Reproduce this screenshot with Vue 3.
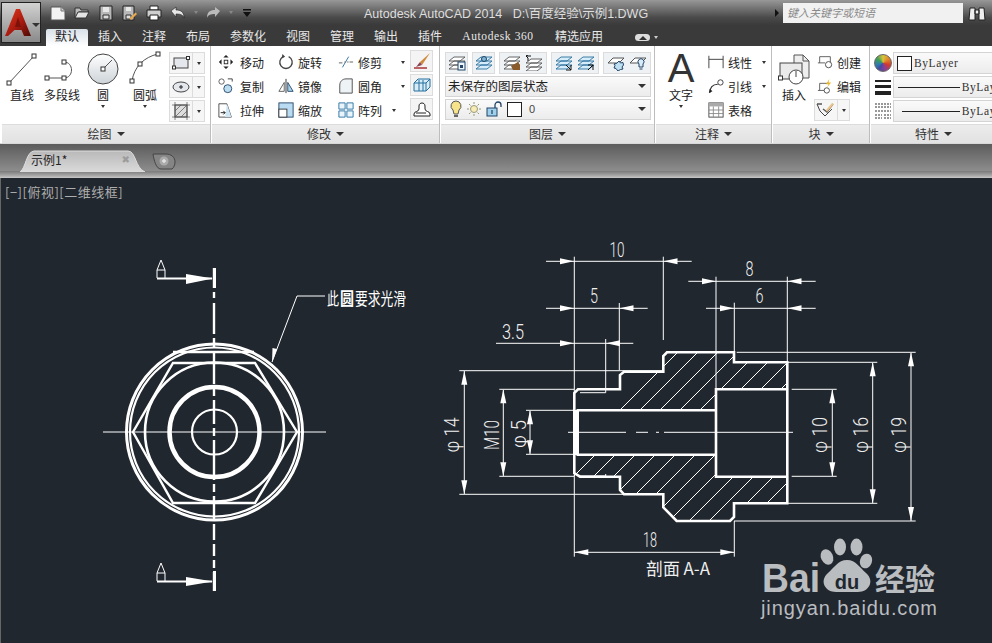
<script setup>
const menuTabs = ['插入','注释','布局','参数化','视图','管理','输出','插件']
const hatch = []
for (let c = 900; c < 1400; c += 20) hatch.push(c)
const dashV = [[268,288],[292,298],[303,334],[338,347],[352,384],[388,396],[400,424],[428,436],[440,480],[484,492],[496,520],[524,540],[544,556],[560,568],[572,591]]
const arrows = [
  [546,261.3,574,'r'],[691,261.3,663.5,'l'],
  [546,308.3,574,'r'],[647,308.3,619.5,'l'],
  [546,343.3,574,'r'],[633,343.3,606,'l'],
  [688,281.3,716,'r'],[815,281.3,787.5,'l'],
  [706,308.3,734,'r'],[815,308.3,787.5,'l'],
]
const hDims = [
  { x: 617, y: 256.7, w: 15, t: '10' },
  { x: 749.5, y: 276, w: 8, t: '8' },
  { x: 759.5, y: 302.7, w: 8, t: '6' },
  { x: 594, y: 302.7, w: 8, t: '5' },
  { x: 513, y: 339, w: 22, t: '3.5' },
  { x: 650, y: 546.7, w: 14, t: '18' },
]
const vDims = [
  { x: 459, y: 435, w: 35, t: 'φ 14' },
  { x: 499, y: 435, w: 30, t: 'M10' },
  { x: 526, y: 434, w: 28, t: 'φ 5' },
  { x: 827, y: 435, w: 36, t: 'φ 10' },
  { x: 868, y: 435, w: 36, t: 'φ 16' },
  { x: 906, y: 435, w: 36, t: 'φ 19' },
]
function head(x, y, tip) {
  const d = tip > x ? 1 : -1
  const s = tip - 14 * d
  return `${s},${y - 3} ${tip},${y} ${s},${y + 3}`
}
function vhead(x, tip, dir) {
  const s = tip - 14 * dir
  return `${x - 3},${s} ${x},${tip} ${x + 3},${s}`
}
</script>

<template>
  <div class="app">
    <svg class="defs" width="0" height="0">
      <defs>
        <g id="stk"><path d="M1 6l5-4h11l-5 4zM1 10l5-4h11l-5 4zM1 14l5-4h11l-5 4z" fill="#fff" stroke="#555" stroke-width=".9"/></g>
        <g id="stb"><path d="M1 6l5-4h11l-5 4zM1 10l5-4h11l-5 4zM1 14l5-4h11l-5 4z" fill="#d5ecfa" stroke="#2b6f9c" stroke-width=".9"/></g>
      </defs>
    </svg>
    <div class="logo">
      <svg width="26" height="28" viewBox="0 0 26 28"><defs><linearGradient id="ar" x1="0" y1="0" x2="1" y2="1"><stop offset="0" stop-color="#e5391d"/><stop offset=".55" stop-color="#a81a10"/><stop offset="1" stop-color="#4e0a06"/></linearGradient></defs><path d="M11 0h4l11 27h-7l-2.500-6H9.500L3 27H0z" fill="url(#ar)"/><path d="M13 8l3 10h-6z" fill="#7d120b"/></svg>
      <i class="tri light"></i>
    </div>

    <header class="titlebar">
      <div class="qat">
        <svg class="q" viewBox="0 0 16 16"><path d="M1 2h10l4 4v9H1z" fill="#f2f2f2" stroke="#555"/><path d="M11 2v4h4" fill="#ccc" stroke="#777"/></svg>
        <svg class="q" viewBox="0 0 16 16"><path d="M1 3h5l1 2h7v2H5l-3 6H1z" fill="#bbb" stroke="#333"/><path d="M4 7h11l-3 6H1z" fill="#e4e4e4" stroke="#333"/></svg>
        <svg class="q" viewBox="0 0 16 16"><path d="M2 1h12v14H2z" fill="#b8b8b8" stroke="#222"/><path d="M5 2h6v5H5z" fill="#e8e8e8"/><path d="M5 10h6v4H5z" fill="#ddd" stroke="#333"/></svg>
        <svg class="q" viewBox="0 0 16 16"><path d="M1 1h11v14H1z" fill="#b8b8b8" stroke="#222"/><path d="M4 2h5v4H4z" fill="#e8e8e8"/><path d="M4 10h5v4H4z" fill="#ddd" stroke="#333"/><path d="M9 15l6-6-1.500-1.500-6 6z" fill="#e9a84a"/></svg>
        <svg class="q" viewBox="0 0 16 16"><path d="M4 1h8v4H4z" fill="#fff" stroke="#222"/><path d="M1 5h14v7H1z" fill="#cfcfcf" stroke="#222"/><path d="M4 10h8v5H4z" fill="#fff" stroke="#222"/></svg>
        <svg class="q" viewBox="0 0 16 16"><path d="M1 6l5-4v3c5 0 8 2 8 8-1-3-3-4-8-4v3z" fill="#e6e6e6" stroke="#222" stroke-width=".6"/></svg>
        <i class="tri small dim"></i>
        <svg class="q dimmed" viewBox="0 0 16 16"><path d="M15 6l-5-4v3c-5 0-8 2-8 8 1-3 3-4 8-4v3z" fill="#bbb"/></svg>
        <i class="tri small dim"></i>
        <svg class="q more" viewBox="0 0 10 10"><path d="M1 1h8v1.500H1zM1 4h8L5 9z" fill="#111"/></svg>
      </div>
      <div class="doc">Autodesk AutoCAD 2014 &nbsp;&nbsp;D:\百度经验\示例1.DWG</div>
      <i class="search-arrow"></i>
      <div class="search">键入关键字或短语</div>
      <svg class="binoc" width="18" height="16" viewBox="0 0 18 16"><path d="M2 3h5v12H1zM11 3h5l1 12h-6zM7 5h4v4H7z" fill="#eee" stroke="#222"/></svg>
    </header>

    <nav class="menubar">
      <div class="tab active">默认</div>
      <div v-for="t in menuTabs" :key="t" class="tab">{{ t }}</div>
      <div class="tab mono">Autodesk 360</div>
      <div class="tab">精选应用</div>
      <div class="tab-ctl"><span class="pill"><i class="tri up"></i></span><i class="tri small pale"></i></div>
    </nav>

    <section class="ribbon">
      <div class="panel p-draw">
        <div class="body draw-body">
          <div class="big w-line">
            <svg width="32" height="36" viewBox="0 0 32 36"><path d="M3 32L28 5" stroke="#555"/><rect x="1" y="30" width="4" height="4" fill="#fff" stroke="#333"/><rect x="26" y="3" width="4" height="4" fill="#fff" stroke="#333"/></svg>
            <span>直线</span>
          </div>
          <div class="big w-pline">
            <svg width="36" height="36" viewBox="0 0 36 36"><path d="M3 27h17c10 0 10-16 0-16" fill="none" stroke="#555"/><rect x="1" y="25" width="4" height="4" fill="#fff" stroke="#333"/><rect x="18" y="25" width="4" height="4" fill="#fff" stroke="#333"/><rect x="18" y="9" width="4" height="4" fill="#fff" stroke="#333"/></svg>
            <span>多段线</span>
          </div>
          <div class="big w-circ">
            <svg width="32" height="36" viewBox="0 0 32 36"><defs><linearGradient id="cg" x1="0" y1="0" x2="0" y2="1"><stop offset="0" stop-color="#fff"/><stop offset="1" stop-color="#cdd3d8"/></linearGradient></defs><circle cx="16" cy="18" r="15" fill="url(#cg)" stroke="#444"/><path d="M16 18l9-9" stroke="#555"/><rect x="14" y="16" width="4" height="4" fill="#fff" stroke="#333"/></svg>
            <span>圆</span><i class="tri small"></i>
          </div>
          <div class="big w-arc">
            <svg width="34" height="36" viewBox="0 0 34 36"><path d="M4 30C6 16 16 6 30 3" fill="none" stroke="#555"/><rect x="2" y="28" width="4" height="4" fill="#fff" stroke="#333"/><rect x="10" y="11" width="4" height="4" fill="#fff" stroke="#333"/><rect x="28" y="1" width="4" height="4" fill="#fff" stroke="#333"/></svg>
            <span>圆弧</span><i class="tri small"></i>
          </div>
          <div class="stack">
            <div class="split"><span><svg width="18" height="14" viewBox="0 0 18 14"><rect x="2" y="2" width="14" height="10" fill="#e4e8ec" stroke="#444"/><rect x="0.500" y="10" width="3" height="3" fill="#fff" stroke="#333"/><rect x="14.500" y="0.500" width="3" height="3" fill="#fff" stroke="#333"/></svg></span><b><i class="tri small"></i></b></div>
            <div class="split"><span><svg width="18" height="14" viewBox="0 0 18 14"><ellipse cx="9" cy="7" rx="8" ry="5" fill="#e4e8ec" stroke="#444"/><path d="M7 7h4M9 5v4" stroke="#222"/></svg></span><b><i class="tri small"></i></b></div>
            <div class="split"><span><svg width="18" height="18" viewBox="0 0 18 18"><rect x="3" y="3" width="12" height="12" fill="#ddd" stroke="#444"/><path d="M3 9l6-6M3 15L15 3M9 15l6-6M0 3h18M0 15h18M3 0v18M15 0v18" stroke="#555" stroke-width=".7"/></svg></span><b><i class="tri small"></i></b></div>
          </div>
        </div>
        <footer class="foot">绘图 <i class="tri"></i></footer>
      </div>

      <div class="panel p-modify">
        <div class="body modify-body">
          <div class="row c1"><svg class="ic" viewBox="0 0 18 18"><path d="M9 1l3 3H6zM9 17l3-3H6zM1 9l3-3v6zM17 9l-3-3v6z" fill="#222"/><rect x="7" y="7" width="4" height="4" fill="#fff" stroke="#222"/></svg>移动</div>
          <div class="row"><svg class="ic" viewBox="0 0 18 18"><path d="M12 3a7 7 0 1 1-6 0" fill="none" stroke="#444" stroke-width="1.500"/><path d="M5 0l3 3-4 2z" fill="#444"/></svg>旋转</div>
          <div class="row"><svg class="ic" viewBox="0 0 18 18"><path d="M1 10h4M13 9h4" stroke="#555"/><path d="M5 15L12 3" stroke="#256a9a"/><path d="M7 9h2M10 9h2" stroke="#777"/></svg>修剪<i class="tri small push"></i></div>
          <div class="btn"><svg width="18" height="18" viewBox="0 0 18 18"><path d="M17 1L7 10l2 3z" fill="#d08a3a"/><path d="M7 10l-4 5 6-2z" fill="#845"/><path d="M1 16h13" stroke="#a33" stroke-width="1.500"/></svg></div>

          <div class="row c1"><svg class="ic" viewBox="0 0 18 18"><circle cx="4" cy="4" r="3" fill="none" stroke="#555"/><circle cx="11" cy="12" r="4.500" fill="#bcdcf0" stroke="#246"/><path d="M11 1h5v3" fill="none" stroke="#333"/></svg>复制</div>
          <div class="row"><svg class="ic" viewBox="0 0 18 18"><path d="M9 1v16" stroke="#222"/><path d="M7 5v10H1z" fill="#fff" stroke="#555"/><path d="M11 5v10h6z" fill="#aad4ee" stroke="#246"/></svg>镜像</div>
          <div class="row"><svg class="ic" viewBox="0 0 18 18"><path d="M2 17V8c0-4 3-7 7-7h7v16z" fill="#eef3f6" stroke="#444"/></svg>圆角<i class="tri small push"></i></div>
          <div class="btn"><svg width="20" height="16" viewBox="0 0 20 16"><path d="M2 6l4-4h12v8l-4 4H2z" fill="#d8ecf8" stroke="#25709f"/><path d="M2 6h12v8M14 6l4-4M7 3v11M11 3v11" fill="none" stroke="#25709f"/></svg></div>

          <div class="row c1"><svg class="ic" viewBox="0 0 18 18"><path d="M1 2h9l5 15H1z" fill="#fff" stroke="#444"/><path d="M10 2l5 15H8z" fill="#cfe6f4"/><path d="M3 12h5l-2-2M8 12l-2 2" fill="none" stroke="#111"/></svg>拉伸</div>
          <div class="row"><svg class="ic" viewBox="0 0 18 18"><rect x="1" y="1" width="16" height="16" fill="#b9dcf2" stroke="#246"/><rect x="1" y="8" width="9" height="9" fill="#fff" stroke="#333"/></svg>缩放</div>
          <div class="row"><svg class="ic" viewBox="0 0 18 18"><path d="M1 1h7v7H1zM10 1h7v7h-7zM1 10h7v7H1zM10 10h7v7h-7z" fill="#eaf4fb" stroke="#25709f"/></svg>阵列<i class="tri small push near"></i></div>
          <div class="btn"><svg width="18" height="16" viewBox="0 0 18 16"><path d="M1 13c0-3 5-2 5-5V5c0-4 6-4 6 0v3c0 3 5 2 5 5v2H1z" fill="#fff" stroke="#222"/><path d="M3 12h10" stroke="#222"/></svg></div>
        </div>
        <footer class="foot">修改 <i class="tri"></i></footer>
      </div>

      <div class="panel p-layer">
        <div class="body layer-body">
          <div class="lrow">
            <div class="btn l1"><svg width="18" height="16" viewBox="0 0 18 16"><use href="#stk"/><rect x="10" y="7" width="7" height="8" fill="#eef6fb" stroke="#246"/><rect x="12" y="10" width="3" height="3" fill="#246"/></svg></div>
            <div class="btn l1"><svg width="18" height="16" viewBox="0 0 18 16"><use href="#stb"/><circle cx="9" cy="4" r="2.500" fill="#7fb4d6" stroke="#246"/></svg></div>
            <div class="btn l2"><svg width="18" height="16" viewBox="0 0 18 16"><use href="#stk"/><path d="M8 11l7-4 2 3v5h-7z" fill="#8b5a2b"/></svg><svg width="18" height="16" viewBox="0 0 18 16"><g transform="translate(0 2)"><use href="#stk"/></g><path d="M1 1h5M1 1l2-1M1 1l2 2M3 3v3" fill="none" stroke="#111"/></svg></div>
            <div class="btn l2"><svg width="18" height="16" viewBox="0 0 18 16"><use href="#stb"/><path d="M11 10l5 5M11 15h5v-5" fill="none" stroke="#111"/></svg><svg width="18" height="16" viewBox="0 0 18 16"><use href="#stb"/><path d="M11 15l5-5M11 10h5v5" fill="none" stroke="#111"/></svg></div>
            <div class="btn l2"><svg width="18" height="16" viewBox="0 0 18 16"><path d="M1 8l5-5h11l-5 5z" fill="#fff" stroke="#555"/><path d="M12 6l1.500 2 2.500-.5.500 2.500-1.500 2 1 2-2.500.5L11 16l-2-2.500-2-.5 1-2.500L7 9l2.500-.5z" fill="#bfe0f3" stroke="#246"/></svg><svg width="18" height="16" viewBox="0 0 18 16"><path d="M1 8l5-5h11l-5 5z" fill="#fff" stroke="#555"/><path d="M10 9a3 3 0 1 1 4 0v3h-4z" fill="#d8ecf8" stroke="#246"/><path d="M10.500 14h3" stroke="#246"/></svg></div>
          </div>
          <div class="combo"><span>未保存的图层状态</span><i class="tri"></i></div>
          <div class="combo c2">
            <svg width="12" height="18" viewBox="0 0 12 18"><path d="M6 1a5 5 0 0 0-3 9l1 4h4l1-4a5 5 0 0 0-3-9z" fill="#f7e48a" stroke="#555"/><path d="M4 15h4v2H4z" fill="#666"/></svg>
            <svg width="16" height="16" viewBox="0 0 16 16"><circle cx="8" cy="8" r="3.500" fill="#f8ecb6" stroke="#997"/><path d="M8 1v2M8 13v2M1 8h2M13 8h2M3 3l1.500 1.500M11.500 11.500L13 13M3 13l1.500-1.500M11.500 4.500L13 3" stroke="#997"/></svg>
            <svg width="17" height="16" viewBox="0 0 17 16"><rect x="1" y="7" width="10" height="8" fill="#9fd0ee" stroke="#246"/><path d="M9 7V4a3 3 0 0 1 6 0v2" fill="none" stroke="#246" stroke-width="1.300"/><path d="M6 9v4" stroke="#123"/></svg>
            <b class="swatch"></b><span class="zero">0</span><i class="tri"></i>
          </div>
        </div>
        <footer class="foot">图层 <i class="tri"></i></footer>
      </div>

      <div class="panel p-annot">
        <div class="body annot-body">
          <div class="big text-big"><span class="A">A</span><span>文字</span><i class="tri small"></i></div>
          <div class="col">
            <div class="row"><svg class="ic" viewBox="0 0 18 18"><path d="M1 2v14M17 2v14" stroke="#333"/><path d="M1 6h16" stroke="#333"/></svg>线性<i class="tri small push"></i></div>
            <div class="row"><svg class="ic" viewBox="0 0 18 18"><path d="M2 17c0-6 3-10 9-10" fill="none" stroke="#333" stroke-width="1.300"/><circle cx="14" cy="5" r="3" fill="#fff" stroke="#333"/><path d="M1 17l1-5 3 3z" fill="#222"/></svg>引线<i class="tri small push"></i></div>
            <div class="row"><svg class="ic" viewBox="0 0 18 18"><rect x="1" y="1" width="16" height="16" fill="#fff" stroke="#444"/><path d="M1 1h16v4H1z" fill="#aaa"/><path d="M1 9h16M1 13h16M6 5v12M12 5v12" stroke="#888"/></svg>表格</div>
          </div>
        </div>
        <footer class="foot">注释 <i class="tri"></i></footer>
      </div>

      <div class="panel p-block">
        <div class="body block-body">
          <div class="big ins">
            <svg width="32" height="32" viewBox="0 0 32 32"><path d="M16 1h9l6 6v17H16z" fill="#eee" stroke="#555"/><path d="M25 1v6h6" fill="none" stroke="#555"/><rect x="2" y="9" width="22" height="16" fill="#eaeaea" stroke="#444"/><circle cx="18" cy="23" r="7" fill="#fff" stroke="#444"/><path d="M18 23v-6" stroke="#444"/><rect x="0.500" y="22" width="4" height="4" fill="#fff" stroke="#333"/></svg>
            <span>插入</span>
          </div>
          <div class="col">
            <div class="row"><svg class="ic" viewBox="0 0 18 18"><path d="M3 10V3h12v7" fill="#fff" stroke="#555"/><path d="M1 10h8" stroke="#555"/><circle cx="13" cy="12" r="3.500" fill="#fff" stroke="#444"/></svg>创建</div>
            <div class="row"><svg class="ic" viewBox="0 0 18 18"><path d="M3 14V6h10" fill="#fff" stroke="#555"/><path d="M1 14h8" stroke="#555"/><circle cx="11" cy="14" r="3" fill="#fff" stroke="#444"/><path d="M14 1l-4 6h3l-2 4 5-6h-3z" fill="#e8b52c"/></svg>编辑</div>
            <div class="split s2"><span><svg width="20" height="16" viewBox="0 0 20 16"><path d="M1 2l3 7 5 5 7-7" fill="none" stroke="#444"/><path d="M1 2h5M7 7l4 3 6-8" fill="none" stroke="#555" stroke-width="1.300"/><path d="M11 10l7-8-2-1-6 7z" fill="#e9c38a"/></svg></span><b><i class="tri small"></i></b></div>
          </div>
        </div>
        <footer class="foot">块 <i class="tri"></i></footer>
      </div>

      <div class="panel p-prop">
        <div class="body prop-body">
          <div class="prow"><i class="wheel"></i><div class="pcombo"><b class="swatch"></b><span class="by">ByLayer</span></div></div>
          <div class="prow"><svg width="18" height="18" viewBox="0 0 18 18"><path d="M1 2h16v2H1zM1 7h16v3H1zM1 13h16v4H1z" fill="#222"/></svg><div class="pcombo"><i class="ln"></i><span class="by">ByLay</span></div></div>
          <div class="prow"><svg width="18" height="18" viewBox="0 0 18 18"><path d="M1 2h16M1 5h16M1 9h16M1 13h7M10 13h7M1 16h7M10 16h7" stroke="#333" stroke-dasharray="2 1"/></svg><div class="pcombo"><i class="ln ind"></i><span class="by">ByLay</span></div></div>
        </div>
        <footer class="foot">特性 <i class="tri"></i></footer>
      </div>
    </section>

    <div class="strip">
      <div class="doc-tab">
        <svg class="tab-shape" width="125" height="22" viewBox="0 0 125 22"><defs><linearGradient id="tb" x1="0" y1="0" x2="0" y2="1"><stop offset="0" stop-color="#b9b9b9"/><stop offset="1" stop-color="#dadada"/></linearGradient></defs><path d="M0 22C6 18 6 2 14 1h94c8 0 7 17 17 21z" fill="url(#tb)" stroke="#dddddd"/></svg>
        <span class="doc-name">示例1*</span>
        <span class="doc-x">✖</span>
      </div>
      <svg class="new-tab" width="24" height="18" viewBox="0 0 24 18"><path d="M1 2h13c5 0 9 3 9 8 0 3-1 5-3 7H9C4 17 2 8 1 2z" fill="#858585" stroke="#444"/><circle cx="12" cy="9" r="4.500" fill="#ababab"/><path d="M10 9h4M12 7v4" stroke="#e4e4e4" stroke-width="1.500"/></svg>
    </div>

    <main class="canvas">
      <div class="viewlabel">[−][俯视][二维线框]</div>
      <svg class="drawing" width="992" height="465" viewBox="0 178 992 465">
        <defs>
          <clipPath id="hz">
            <path clip-rule="evenodd" d="M574 389.300H620V371.700H663.300V352.300H734V362.300H787.300V503.300H734V521H676.700L663.300 507.300V494.300H620V476.700H574ZM574 410.300H716V389.300H787.300V476.700H716V454.700H574Z"/>
          </clipPath>
        </defs>

        <!-- end view -->
        <g fill="none" stroke="#fff">
          <circle cx="214.500" cy="432" r="88" stroke-width="3"/>
          <circle cx="214.500" cy="432" r="84.500" stroke-width="2.200"/>
          <circle cx="214.500" cy="432" r="69.500" stroke-width="2.600"/>
          <circle cx="214.500" cy="432" r="45" stroke-width="4.500"/>
          <circle cx="214.500" cy="432" r="22.500" stroke-width="2.200"/>
          <path d="M133 432L173 363H255L297 432L255 503H173Z" stroke-width="2.400"/>
          <path d="M173 352H254" stroke-width="2.600"/>
          <path d="M103 432H326" stroke-width="1"/>
          <g stroke-width="2.400"><path v-for="(d,i) in dashV" :key="i" :d="`M214 ${d[0]}V${d[1]}`"/></g>
          <path d="M214.500 268V288M214.500 571V591" stroke-width="3"/>
          <path d="M157 278.500H212M157 581.500H212" stroke-width="2"/>
          <path d="M157 278V270H165V278M157 270L161 260L165 270M157 581V573H165V581M157 573L161 563L165 573" stroke-width="1"/>
          <path d="M325 296H297L272 362" stroke-width="1"/>
        </g>
        <path d="M186 274L213 278.500L186 284ZM186 577L213 581.500L186 586ZM272 362.500L272.500 348L277 349Z" fill="#fff"/>
        <text class="cad-cn" x="327" y="305" textLength="12" lengthAdjust="spacingAndGlyphs">此</text>
        <text class="cad-cn heavy" x="340" y="305" textLength="14" lengthAdjust="spacingAndGlyphs">圆</text>
        <text class="cad-cn" x="355" y="305" textLength="51" lengthAdjust="spacingAndGlyphs">要求光滑</text>

        <!-- section view -->
        <g clip-path="url(#hz)" stroke="#fff" stroke-width="1" fill="none">
          <path v-for="c in hatch" :key="c" :d="`M${c - 400} 530L${c - 200} 330`"/>
        </g>
        <g fill="none" stroke="#fff">
          <path stroke-width="2.600" d="M578 389.300H620V375L624 371.700H663.300V356L667 352.300H734V362.300H787.300V503.300H734V517L730 521H676.700L663.300 507.300V494.300H624L620 490V476.700H580L574.300 473V393ZM576.500 410.300H716V389.300H787.300M576.500 454.700H716V476.700H787.300M716 410.300V454.700"/>
          <path stroke-width="4" d="M577 410V455"/>
          <path stroke-width="1" d="M568 432.300H626M636 432.300H648M656 432.300H659M664 432.300H793"/>
          <g stroke-width="1">
            <path d="M574.300 256.700V556.700M663.300 256.700V340M546 261.300H691.700"/>
            <path d="M716 276.700V389M787.300 276.700V362M688.300 281.300H815.700"/>
            <path d="M734.300 302.700V352M706 308.300H815.700M546 308.300H647.700M619.300 303V370"/>
            <path d="M605.700 339V392.700H580M496 343.300H633.300"/>
            <path d="M574.300 552.300H734.300M734.300 521V556.700M580 476H605.700V474"/>
            <path d="M464.300 371V494M459.300 370.700H663M459.300 494.300H623"/>
            <path d="M503.300 390V476M499.300 389.300H574M499.300 476.300H574"/>
            <path d="M530 411V454M526 410.300H574M526 454.300H574"/>
            <path d="M832.300 390V476M791.700 389.300H836.700M791.700 476.300H836.700"/>
            <path d="M872.700 363V503M787 362.300H877.300M787 503.300H877.300"/>
            <path d="M911 353V521M736.700 352.300H915.700M734 521H915.700"/>
          </g>
        </g>
        <g fill="#fff">
          <polygon v-for="(a,i) in arrows" :key="i" :points="head(a[0],a[1],a[2])"/>
          <polygon :points="head(600,552.300,574.300)"/><polygon :points="head(700,552.300,734.300)"/>
          <polygon :points="vhead(464.300,370.700,-1)"/><polygon :points="vhead(464.300,494.300,1)"/>
          <polygon :points="vhead(503.300,389.300,-1)"/><polygon :points="vhead(503.300,476.300,1)"/>
          <polygon :points="vhead(530,410.300,-1)"/><polygon :points="vhead(530,454.300,1)"/>
          <polygon :points="vhead(832.300,389.300,-1)"/><polygon :points="vhead(832.300,476.300,1)"/>
          <polygon :points="vhead(872.700,362.300,-1)"/><polygon :points="vhead(872.700,503.300,1)"/>
          <polygon :points="vhead(911,352.300,-1)"/><polygon :points="vhead(911,521,1)"/>
        </g>
        <g class="cad" text-anchor="middle">
          <text v-for="d in hDims" :key="d.t" :x="d.x" :y="d.y" :textLength="d.w" lengthAdjust="spacingAndGlyphs">{{ d.t }}</text>
          <text v-for="d in vDims" :key="d.t" :transform="`translate(${d.x} ${d.y}) rotate(-90)`" :textLength="d.w" lengthAdjust="spacingAndGlyphs">{{ d.t }}</text>
        </g>
        <text class="cad-cn sec" x="646" y="575" textLength="64" lengthAdjust="spacingAndGlyphs">剖面 A-A</text>

        <!-- watermark -->
        <g fill="#babdc0">
          <text class="bai" x="762" y="592" textLength="58" lengthAdjust="spacingAndGlyphs">Bai</text>
          <ellipse cx="827" cy="557" rx="6" ry="8" transform="rotate(-25 827 557)"/>
          <ellipse cx="840" cy="547" rx="6" ry="8.500"/>
          <ellipse cx="856.500" cy="547" rx="6" ry="8.500"/>
          <ellipse cx="866" cy="561" rx="6" ry="7.500" transform="rotate(20 866 561)"/>
          <path d="M847 560C856 560 860 568 866 573C875 581 869 592 858 592H836C825 592 819 581 828 573C834 568 838 560 847 560Z"/>
          <text class="wz" x="875" y="590" textLength="60" lengthAdjust="spacingAndGlyphs">经验</text>
          <text class="jy" x="761" y="615" textLength="176" lengthAdjust="spacing">jingyan.baidu.com</text>
        </g>
        <text class="du" x="847" y="589" text-anchor="middle" fill="#20272e">du</text>
      </svg>
    </main>
  </div>
</template>

<style>
html, body { margin: 0; background: #21272e; overflow: hidden; }
</style>

<style scoped>
.app { position: relative; width: 992px; height: 643px; display: flex; flex-direction: column; overflow: hidden; font-family: "Noto Sans CJK SC", "Noto Sans", sans-serif; font-size: 12px; color: #222; }
.defs { position: absolute; }
.logo { position: absolute; left: 1px; top: 2px; width: 40px; height: 41px; box-sizing: border-box; border: 1px solid #222; background: linear-gradient(#d2d2d2, #8a8a8a); display: flex; align-items: center; padding-left: 3px; gap: 1px; z-index: 2; }
.tri { display: inline-block; width: 0; height: 0; border-left: 4px solid transparent; border-right: 4px solid transparent; border-top: 4px solid #333; }
.tri.small { border-left-width: 2.5px; border-right-width: 2.5px; border-top-width: 3px; }
.tri.light { border-top-color: #333; margin-top: 4px; }
.tri.dim { border-top-color: #888; }
.tri.pale { border-top-color: #ccc; }
.tri.up { border-top: 0; border-bottom: 4px solid #333; }

.titlebar { height: 25px; display: flex; align-items: center; background: linear-gradient(#989898, #4a4a4a 70%, #3a3a3a); box-sizing: border-box; padding-left: 50px; }
.qat { width: 252px; display: flex; align-items: center; gap: 8px; flex: none; }
.q { width: 16px; height: 16px; flex: none; }
.q.dimmed { margin-left: 0; }
.q.more { width: 10px; height: 10px; margin-left: 2px; }
.qat .tri.dim { margin: 0 -1px 0 0; }
.doc { margin-left: 62px; width: 411px; flex: none; color: #dedede; font-family: "Liberation Sans", "Noto Sans CJK SC", sans-serif; font-size: 12.5px; white-space: pre; }
.search-arrow { width: 0; height: 0; border-left: 4px solid #111; border-top: 4px solid transparent; border-bottom: 4px solid transparent; flex: none; margin-right: 4px; }
.search { width: 180px; height: 20px; flex: none; box-sizing: border-box; background: #f1f1f1; color: #8a8a8a; font-style: italic; font-size: 11px; line-height: 18px; padding-left: 4px; }
.binoc { margin-left: 5px; flex: none; }

.menubar { height: 21px; display: flex; align-items: flex-end; background: #3a3a3a; padding-left: 46px; box-sizing: border-box; }
.tab { width: 44px; height: 17px; line-height: 14px; text-align: center; color: #e8e8e8; font-size: 12px; flex: none; }
.tab.active { width: 42px; background: linear-gradient(#d8e0e8, #fff); color: #222; border-radius: 2px 2px 0 0; }
.tab:nth-child(5) { width: 56px; }
.tab:nth-child(6) { width: 44px; }
.tab.mono { width: 92px; font-family: "Liberation Serif", serif; font-size: 11.500px; letter-spacing: .6px; }
.tab.mono + .tab { width: 70px; }
.tab-ctl { margin-left: 21px; height: 17px; display: flex; align-items: center; gap: 4px; }
.pill { width: 15px; height: 7px; border-radius: 4px; background: #ddd; display: flex; align-items: center; justify-content: center; }

.ribbon { height: 98px; background: #fff; display: flex; gap: 1px; padding-left: 2px; box-sizing: border-box; border-bottom: 1px solid #d8d8d8; flex: none; }
.panel { height: 97px; display: flex; flex-direction: column; border-right: 1px solid #bdbdbd; box-sizing: border-box; flex: none; }
.body { flex: 1; min-height: 0; box-sizing: border-box; }
.foot { height: 18px; flex: none; background: linear-gradient(#ececec, #e2e2e2); border-top: 1px solid #dcdcdc; display: flex; align-items: center; justify-content: center; gap: 5px; font-size: 12px; color: #333; line-height: 1; }
.p-draw { width: 209px; }
.p-modify { width: 228px; }
.p-layer { width: 214px; }
.p-annot { width: 116px; }
.p-block { width: 97px; }
.p-prop { width: 125px; border-right: 0; }

.big { display: flex; flex-direction: column; align-items: center; font-size: 12px; line-height: 14px; flex: none; }
.big span { display: block; }
.big .tri { margin-top: 3px; }
.draw-body { display: flex; padding: 5px 0 0 3px; }
.w-line { width: 34px; }
.w-pline { width: 40px; margin-left: 3px; }
.w-circ { width: 34px; margin-left: 4px; }
.w-arc { width: 38px; margin-left: 6px; }
.w-line span, .w-pline span, .w-circ span, .w-arc span { margin-top: 1px; }
.stack { display: flex; flex-direction: column; gap: 2px; margin: 1px 0 0 5px; }
.split { width: 36px; height: 22px; display: flex; border: 1px solid #dcdcdc; box-sizing: border-box; background: #f6f6f6; }
.split span { flex: 1; display: flex; align-items: center; justify-content: center; }
.split b { width: 11px; display: flex; align-items: center; justify-content: center; border-left: 1px solid #dcdcdc; }
.s2 { margin-top: 1px; }

.modify-body { display: grid; grid-template-columns: 60px 60px 72px 24px; grid-auto-rows: 24px; padding: 4px 0 0 6px; }
.row { display: flex; align-items: center; gap: 4px; font-size: 12px; }
.row.c1 { gap: 6px; }
.ic { width: 16px; height: 16px; flex: none; }
.push { margin-left: auto; margin-right: 5px; }
.push.near { margin-left: 6px; }
.btn { width: 23px; height: 22px; display: flex; align-items: center; justify-content: center; background: #f4f4f4; border: 1px solid #dcdcdc; box-sizing: border-box; }

.layer-body { display: flex; flex-direction: column; padding: 6px 3px 0 4px; gap: 2px; }
.lrow { display: flex; gap: 4px; height: 22px; }
.btn.l1 { width: 23px; background: #eef2f5; }
.btn.l2 { width: 48px; background: #eef2f5; gap: 4px; }
.combo { height: 21px; display: flex; align-items: center; gap: 2px; padding: 0 4px 1px 2px; background: linear-gradient(#fafafa, #ececec); border: 1px solid #d4d4d4; box-sizing: border-box; font-size: 12.500px; line-height: 14px; }
.combo.c2 { gap: 4px; padding-left: 4px; }
.combo .tri { margin-left: auto; }
.swatch { width: 15px; height: 15px; background: #fff; border: 1px solid #222; box-sizing: border-box; display: block; flex: none; }
.zero { margin-left: 3px; font-family: "Liberation Sans", sans-serif; font-size: 11px; color: #444; }

.annot-body { display: flex; padding: 4px 0 0 1px; }
.text-big { width: 48px; }
.text-big .A { font-family: "Liberation Sans", sans-serif; font-size: 40px; line-height: 36px; height: 36px; color: #333; }
.text-big span:nth-child(2) { margin-top: 2px; }
.col { flex: 1; display: flex; flex-direction: column; margin-left: 3px; }
.annot-body .col { padding-top: 0; }
.col .row { height: 24px; }
.col .split { margin-left: -3px; }

.block-body { display: flex; padding: 8px 0 0 4px; }
.ins { width: 34px; }
.ins span { margin-top: 2px; }
.block-body .col { margin-left: 6px; margin-top: -4px; }

.prop-body { display: flex; flex-direction: column; gap: 2px; padding: 6px 0 0 3px; }
.prow { display: flex; align-items: center; gap: 1px; height: 22px; }
.wheel { width: 18px; height: 18px; border-radius: 50%; flex: none; background: conic-gradient(#d9c43a, #e0862e, #d23a2a 30%, #8a3d9a 45%, #3d4ea0 60%, #2e7ab0 70%, #3f9f58 85%, #d9c43a); border: 1px solid #666; box-sizing: border-box; }
.pcombo { flex: 1; height: 22px; display: flex; align-items: center; gap: 2px; background: linear-gradient(#fafafa, #ececec); border: 1px solid #d4d4d4; border-right: 0; padding-left: 3px; box-sizing: border-box; overflow: hidden; }
.by { font-family: "Liberation Serif", serif; font-size: 11.500px; letter-spacing: .6px; color: #333; white-space: nowrap; }
.ln { display: block; flex: 1; height: 1px; background: #222; margin-left: 1px; }
.ln.ind { margin-left: 5px; }

.strip { height: 34px; flex: none; box-sizing: border-box; padding: 6px 0 0 20px; display: flex; align-items: flex-start; gap: 7px; background: linear-gradient(#5c5c5c, #8c8c8c 78%, #7c7c7c 80%, #a4a4a4 92%, #c8c8c8); }
.doc-tab { position: relative; width: 125px; height: 22px; display: flex; align-items: center; justify-content: space-between; padding: 0 15px 3px 11px; box-sizing: border-box; }
.tab-shape { position: absolute; left: 0; top: 0; }
.doc-name { position: relative; font-size: 12px; line-height: 14px; color: #222; }
.doc-x { position: relative; color: #9c9c9c; font-size: 10px; line-height: 14px; font-family: "DejaVu Sans", sans-serif; }
.new-tab { margin-top: 2px; }

.canvas { position: relative; flex: 1; min-height: 0; background: #21272e; border-left: 1px solid #666; box-sizing: border-box; }
.viewlabel { position: absolute; left: 4px; top: 4px; color: #aeaeae; font-size: 13px; letter-spacing: .5px; z-index: 1; }
.drawing { position: absolute; left: -1px; top: 0; display: block; }
.cad { font-family: Roboto, "Liberation Sans", sans-serif; font-size: 20px; font-weight: 300; fill: #f0f0f0; }
.cad-cn { font-family: "Noto Sans CJK SC", sans-serif; font-size: 17.500px; fill: #fff; }
.cad-cn.heavy { font-weight: 700; }
.cad-cn.sec { font-size: 17px; fill: #eee; }
.bai { font-family: "Liberation Sans", sans-serif; font-size: 40px; font-weight: 700; }
.wz { font-family: "Noto Sans CJK SC", sans-serif; font-size: 30px; font-weight: 700; }
.jy { font-family: "Liberation Sans", sans-serif; font-size: 20px; }
.du { font-family: "Liberation Sans", sans-serif; font-size: 20px; font-weight: 700; }
</style>
